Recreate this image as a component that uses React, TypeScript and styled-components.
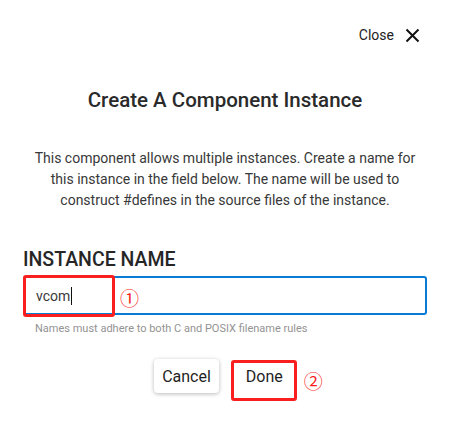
import React from 'react';
import styled, { createGlobalStyle } from 'styled-components';

const GlobalStyle = createGlobalStyle`
  html, body {
    margin: 0;
    padding: 0;
    background: #fff;
  }
  body {
    font-family: Roboto, "Liberation Sans", Arial, sans-serif;
    color: #222;
  }
`;

const Dialog = styled.div`
  width: 452px;
  height: 425px;
  box-sizing: border-box;
  padding: 25px 25px 0 23px;
  display: flex;
  flex-direction: column;
`;

const TopBar = styled.div`
  display: flex;
  justify-content: flex-end;
  height: 20px;
`;

const CloseButton = styled.button`
  display: flex;
  align-items: center;
  gap: 11px;
  height: 20px;
  border: none;
  background: none;
  padding: 0 7px 0 0;
  font-family: inherit;
  font-size: 14px;
  line-height: 20px;
  color: #222;
  cursor: pointer;
`;

const Title = styled.h2`
  margin: 43px 0 0;
  text-align: center;
  font-size: 20.5px;
  line-height: 24px;
  font-weight: 500;
  color: #2a2a2a;
`;

const Description = styled.p`
  margin: 36px auto 0;
  max-width: 392px;
  text-align: center;
  font-size: 14px;
  line-height: 21px;
  color: #383838;
`;

const Label = styled.label`
  display: block;
  margin-top: 37px;
  font-size: 19.5px;
  line-height: 24px;
  font-weight: 500;
  color: #262626;
`;

const Field = styled.div`
  position: relative;
  margin-top: 4px;
`;

const TextBox = styled.div`
  height: 39px;
  box-sizing: border-box;
  border: 2px solid #0a7bd4;
  border-radius: 3px;
  display: flex;
  align-items: center;
  padding-left: 11px;
  font-size: 14px;
  color: #3a3a3a;
`;

const Caret = styled.span`
  display: inline-block;
  width: 1px;
  height: 18px;
  margin-left: 1px;
  background: #111;
`;

const Highlight = styled.div<{ $w: number; $h: number; $top: number; $left: number }>`
  position: absolute;
  top: ${(p) => p.$top}px;
  left: ${(p) => p.$left}px;
  width: ${(p) => p.$w}px;
  height: ${(p) => p.$h}px;
  box-sizing: border-box;
  border: 3px solid #fa1f1f;
  border-radius: 3px;
  pointer-events: none;
`;

const Marker = styled.span<{ $top: number; $left: number }>`
  position: absolute;
  top: ${(p) => p.$top}px;
  left: ${(p) => p.$left}px;
  font-family: "Noto Sans CJK SC", "DejaVu Sans", sans-serif;
  font-size: 19px;
  line-height: 20px;
  color: #fa1f1f;
`;

const Hint = styled.div`
  margin: 7px 0 0 12px;
  font-size: 11px;
  line-height: 14px;
  color: #939393;
`;

const Actions = styled.div`
  display: flex;
  justify-content: center;
  gap: 14px;
  margin-top: 23px;
`;

const Button = styled.button<{ $raised?: boolean }>`
  height: 34px;
  min-width: 63px;
  padding: 0 8px;
  border: none;
  border-radius: 4px;
  background: #fff;
  font-family: inherit;
  font-size: 16px;
  font-weight: 400;
  color: #1f1f1f;
  box-shadow: ${(p) => (p.$raised ? '0 1px 4px rgba(0, 0, 0, 0.28)' : 'none')};
  cursor: pointer;
`;

const ButtonSlot = styled.div`
  position: relative;
`;

const XIcon = () => (
  <svg width="15" height="15" viewBox="0 0 15 15" aria-hidden>
    <path d="M1.5 1.5 L13.5 13.5 M13.5 1.5 L1.5 13.5" stroke="#111" strokeWidth="2" />
  </svg>
);

const App: React.FC = () => (
  <>
    <GlobalStyle />
    <Dialog>
      <TopBar>
        <CloseButton>
          Close
          <XIcon />
        </CloseButton>
      </TopBar>
      <Title>Create A Component Instance</Title>
      <Description>
        This component allows multiple instances. Create a name for this instance in the field
        below. The name will be used to construct #defines in the source files of the instance.
      </Description>
      <Label>INSTANCE NAME</Label>
      <Field>
        <TextBox>
          vcom
          <Caret />
        </TextBox>
        <Highlight $top={-1} $left={0} $w={92} $h={42} />
        <Marker $top={12} $left={97}>①</Marker>
      </Field>
      <Hint>Names must adhere to both C and POSIX filename rules</Hint>
      <Actions>
        <Button $raised>Cancel</Button>
        <ButtonSlot>
          <Button>Done</Button>
          <Highlight $top={1} $left={-2} $w={66} $h={41} />
          <Marker $top={12} $left={71}>②</Marker>
        </ButtonSlot>
      </Actions>
    </Dialog>
  </>
);

export default App;
